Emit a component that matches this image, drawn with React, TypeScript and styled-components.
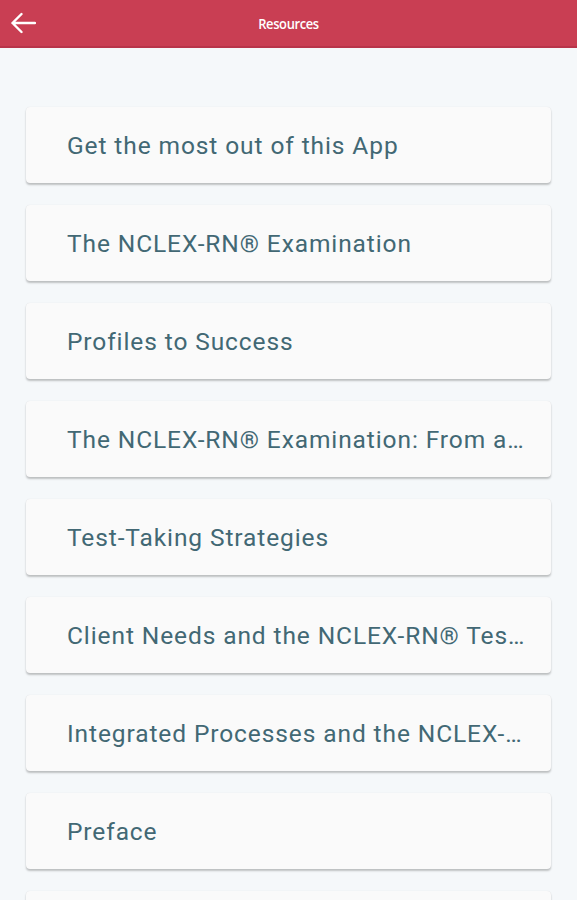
import React from "react";
import styled, { createGlobalStyle } from "styled-components";

const GlobalStyle = createGlobalStyle`
  html, body {
    margin: 0;
    padding: 0;
    background: #f5f8fa;
  }
  body {
    font-family: Roboto, "Noto Sans", sans-serif;
  }
`;

const Page = styled.div`
  width: 100%;
  height: 100vh;
  background: #f5f8fa;
  overflow: hidden;
`;

const Header = styled.header`
  height: 46px;
  background: #c93e53;
  border-bottom: 2px solid #b8344a;
  display: grid;
  grid-template-columns: 48px 1fr 48px;
  align-items: center;
`;

const BackButton = styled.button`
  border: none;
  background: none;
  padding: 0 0 0 10px;
  height: 46px;
  display: flex;
  align-items: center;
  cursor: pointer;
`;

const Title = styled.h1`
  margin: 0;
  text-align: center;
  color: #ffffff;
  font-family: "Open Sans", Roboto, sans-serif;
  font-size: 15px;
  font-weight: 600;
  letter-spacing: -0.4px;
  transform: scaleX(0.86);
`;

const List = styled.div`
  display: flex;
  flex-direction: column;
  gap: 22px;
  padding: 59px 26px 0 26px;
`;

const Card = styled.div`
  flex: none;
  height: 76px;
  background: #fafafa;
  border-radius: 4px;
  box-shadow: 0 2px 2px rgba(0, 0, 0, 0.22), 0 0 1px rgba(0, 0, 0, 0.12);
  display: flex;
  align-items: center;
  padding: 0 24px 0 41px;
  box-sizing: border-box;
  min-width: 0;
`;

const CardText = styled.span`
  font-family: Roboto, sans-serif;
  font-size: 24.5px;
  letter-spacing: 0.9px;
  color: #426874;
  white-space: nowrap;
  overflow: hidden;
  text-overflow: ellipsis;
  min-width: 0;
`;

const items = [
  "Get the most out of this App",
  "The NCLEX-RN® Examination",
  "Profiles to Success",
  "The NCLEX-RN® Examination: From a Graduate's Perspective",
  "Test-Taking Strategies",
  "Client Needs and the NCLEX-RN® Test Plan",
  "Integrated Processes and the NCLEX-RN® Test Plan",
  "Preface",
  "Introduction",
];

export default function App() {
  return (
    <Page>
      <GlobalStyle />
      <Header>
        <BackButton aria-label="Back">
          <svg width="26" height="22" viewBox="0 0 26 22" fill="none">
            <path
              d="M25 11H2.5M11.5 2L2.5 11L11.5 20"
              stroke="#ffffff"
              strokeWidth="2.4"
              strokeLinecap="round"
              strokeLinejoin="round"
            />
          </svg>
        </BackButton>
        <Title>Resources</Title>
        <div />
      </Header>
      <List>
        {items.map((item) => (
          <Card key={item}>
            <CardText>{item}</CardText>
          </Card>
        ))}
      </List>
    </Page>
  );
}
